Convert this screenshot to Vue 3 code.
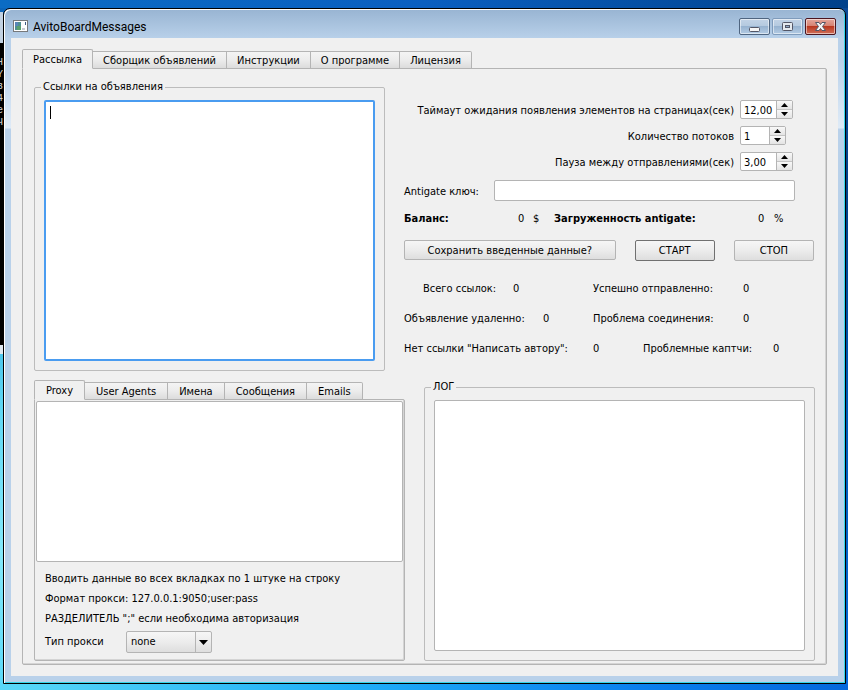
<script setup>
import { ref } from 'vue'

const mainTabs = ['Рассылка', 'Сборщик объявлений', 'Инструкции', 'О программе', 'Лицензия']
const dataTabs = ['Proxy', 'User Agents', 'Имена', 'Сообщения', 'Emails']
const mainTab = ref(0)
const dataTab = ref(0)

const spins = ref([
  { id: 'timeout', label: 'Таймаут ожидания появления элементов на страницах(сек)', value: '12,00', step: 1, digits: 2 },
  { id: 'threads', label: 'Количество потоков', value: '1', step: 1, digits: 0, narrow: true },
  { id: 'pause', label: 'Пауза между отправлениями(сек)', value: '3,00', step: 1, digits: 2 },
])

function change(spin, sign) {
  const next = Math.max(0, parseFloat(spin.value.replace(',', '.')) + sign * spin.step)
  spin.value = next.toFixed(spin.digits).replace('.', ',')
}

const stats = [
  { kind: 'links', a: 'Всего ссылок:', b: 'Успешно отправленно:' },
  { kind: 'removed', a: 'Объявление удаленно:', b: 'Проблема соединения:' },
  { kind: 'captcha', a: 'Нет ссылки "Написать автору":', b: 'Проблемные каптчи:' },
]

const consoleLines = ['Н', 'Y', 'в', '4', 'е', 'Ч']
</script>

<template>
  <div class="desktop">
    <div class="back-window">
      <div class="back-title"></div>
      <div class="console"><span v-for="(c, i) in consoleLines" :key="i">{{ c }}</span></div>
    </div>

    <main class="window">
      <header class="titlebar">
        <svg class="app-icon" viewBox="0 0 15 12" aria-hidden="true">
          <rect x="0.5" y="0.5" width="14" height="11" fill="#fff" stroke="#77797b" />
          <rect x="2" y="2" width="6" height="8" fill="#4f8f92" />
          <rect x="2" y="2" width="3" height="4" fill="#5a86b8" />
          <rect x="4" y="6" width="4" height="4" fill="#5aa06c" />
          <rect x="9" y="8" width="3" height="2" fill="#c9cdd2" />
          <rect x="12" y="2" width="1" height="3" fill="#3f5a86" />
        </svg>
        <h1>AvitoBoardMessages</h1>
        <div class="caption-buttons">
          <button type="button" class="cap" aria-label="Свернуть">
            <svg viewBox="0 0 29 15"><rect x="9.5" y="8.5" width="10" height="4" rx="1" fill="#f5f5f5" stroke="#535666" /></svg>
          </button>
          <button type="button" class="cap dim" aria-label="Развернуть">
            <svg viewBox="0 0 29 15"><rect x="9.5" y="3.5" width="10" height="8" rx="1" fill="#e4e9ee" stroke="#535666" /><rect x="12.5" y="6.5" width="4" height="2" fill="#90aac6" stroke="#535666" /></svg>
          </button>
          <button type="button" class="cap close" aria-label="Закрыть">
            <svg viewBox="0 0 29 15"><path d="M9.500 3.500h3.500l1.500 2 1.500-2h3.500l-3 4 3 4h-3.500l-1.500-2-1.500 2h-3.500l3-4z" fill="#f5f5f5" stroke="#535666" /></svg>
          </button>
        </div>
      </header>

      <div class="client">
        <div class="tabs main-tabs" role="tablist">
          <button v-for="(t, i) in mainTabs" :key="t" type="button" role="tab" class="tab" :class="{ on: i === mainTab }" :aria-selected="i === mainTab" @click="mainTab = i">{{ t }}</button>
        </div>

        <section class="pane main-pane">
          <div class="row top-row">
            <fieldset class="group">
              <legend>Ссылки на объявления</legend>
              <div class="edit focused"><textarea id="links" aria-label="Ссылки на объявления"></textarea><span class="caret"></span></div>
            </fieldset>

            <div class="settings">
              <div class="spin-rows">
                <div v-for="s in spins" :key="s.id" class="spin-row">
                  <label :for="s.id">{{ s.label }}</label>
                  <div class="slot">
                    <div class="spin" :class="{ narrow: s.narrow }">
                      <input :id="s.id" v-model="s.value" type="text" />
                      <div class="steps">
                        <button type="button" aria-label="Больше" @click="change(s, 1)"><svg viewBox="0 0 7 4"><path d="M0 4h7L3.500 0z" /></svg></button>
                        <button type="button" aria-label="Меньше" @click="change(s, -1)"><svg viewBox="0 0 7 4"><path d="M0 0h7L3.500 4z" /></svg></button>
                      </div>
                    </div>
                  </div>
                </div>
              </div>

              <div class="key-row">
                <label for="key">Antigate ключ:</label>
                <input id="key" type="text" />
              </div>

              <div class="balance">
                <b>Баланс:</b><span>0</span><span class="money">$</span>
                <b>Загруженность antigate:</b><span>0</span><span>%</span>
              </div>

              <div class="actions">
                <button type="button" class="push save">Сохранить введенные данные?</button>
                <button type="button" class="push default">СТАРТ</button>
                <button type="button" class="push">СТОП</button>
              </div>

              <div class="stats">
                <div v-for="s in stats" :key="s.kind" class="stat" :class="s.kind">
                  <span>{{ s.a }}</span><span>0</span><span>{{ s.b }}</span><span>0</span>
                </div>
              </div>
            </div>
          </div>

          <div class="row bottom-row">
            <div class="data">
              <div class="tabs data-tabs" role="tablist">
                <button v-for="(t, i) in dataTabs" :key="t" type="button" role="tab" class="tab" :class="{ on: i === dataTab }" :aria-selected="i === dataTab" @click="dataTab = i">{{ t }}</button>
              </div>
              <section class="pane data-pane">
                <div class="edit"><textarea id="proxies" aria-label="Proxy"></textarea></div>
                <div class="notes">
                  <p>Вводить данные во всех вкладках по 1 штуке на строку</p>
                  <p>Формат прокси: 127.0.0.1:9050;user:pass</p>
                  <p>РАЗДЕЛИТЕЛЬ ";" если необходима авторизация</p>
                  <div class="type-row">
                    <label for="ptype">Тип прокси</label>
                    <div class="combo">
                      <select id="ptype"><option>none</option><option>http</option><option>socks5</option></select>
                      <svg viewBox="0 0 9 5" aria-hidden="true"><path d="M0 0h9L4.500 5z" /></svg>
                    </div>
                  </div>
                </div>
              </section>
            </div>

            <fieldset class="group">
              <legend>ЛОГ</legend>
              <div class="edit"><textarea id="log" aria-label="ЛОГ" readonly></textarea></div>
            </fieldset>
          </div>
        </section>
      </div>
    </main>
  </div>
</template>

<style>
body {
  margin: 0;
}
</style>

<style scoped>
* {
  box-sizing: border-box;
}

.desktop {
  position: relative;
  display: flex;
  min-height: 100vh;
  padding: 8px 2px 6px 3px;
  background:
    linear-gradient(90deg, #0b6cc4, #0a5fc0 50%, #00418a) top / 100% 8px no-repeat,
    linear-gradient(90deg, #5ad8f8, #20b0f8 40%, #0a80ee 75%, #0468dc) bottom / 100% 6px no-repeat,
    linear-gradient(#0a4a98, #003f8c 30%, #0058b8 60%, #0468dc) right / 50% 100% no-repeat,
    linear-gradient(#0a62b8, #30b0e0 40%, #62d8f4 60%, #84e8fa 80%, #5ad8f8);
  font: 11px/16px "DejaVu Sans Condensed", "Noto Sans", sans-serif;
  color: #000;
}

button,
input,
select,
textarea {
  margin: 0;
  font: inherit;
  color: inherit;
  outline: 0;
}

.back-window {
  position: absolute;
  top: 12px;
  left: 0;
  width: 3px;
  height: 342px;
  overflow: hidden;
  border-bottom: 9px solid #dfe8f0;
  background: #000;
}

.back-title {
  height: 31px;
  background: #c3d2e2;
}

.console {
  display: flex;
  flex-direction: column;
  padding-top: 14px;
  font: 10px/12px "Liberation Mono", monospace;
  color: #d0d0d0;
  text-indent: -3px;
}

.window {
  position: relative;
  flex: 1;
  display: flex;
  flex-direction: column;
  padding: 0 7px 7px;
  border: 1px solid #000;
  border-radius: 7px 7px 0 0;
  background: linear-gradient(#98b4d2, #b9d1ea 30px, #b9d1ea 50px, #dfebf7 119px, #b9d1ea 120px);
  box-shadow: inset 1px 1px #fff, inset -1px -1px #35d5e8;
}

.titlebar {
  display: flex;
  align-items: center;
  height: 29px;
  padding-left: 2px;
}

.app-icon {
  width: 15px;
  height: 12px;
  margin-top: 5px;
}

h1 {
  flex: 1;
  margin: 6px 0 0 5px;
  font: 12px/16px Roboto, "Noto Sans", sans-serif;
}

.caption-buttons {
  display: flex;
  gap: 2px;
  padding: 6px 2px 0 0;
}

.cap {
  width: 31px;
  height: 17px;
  padding: 0;
  border: 1px solid #4f6580;
  border-radius: 2px;
  background: linear-gradient(#c2d3e6, #b4c9df 48%, #97b3d0 50%, #b3cbe4);
  box-shadow: inset 0 0 0 1px #ffffff88;
}

.cap svg {
  display: block;
  width: 29px;
  height: 15px;
}

.dim {
  border-color: #7f9bbb;
}

.close {
  border-color: #4c1620;
  background: linear-gradient(#e5a79c, #d58070 48%, #b9371f 50%, #d0705a);
}

.client {
  flex: 1;
  display: flex;
  flex-direction: column;
  padding: 11px 11px;
  background: #f0f0f0;
}

.tabs {
  position: relative;
  z-index: 1;
  display: flex;
  align-items: flex-end;
  height: 20px;
  margin-bottom: -1px;
}

.tab {
  height: 18px;
  padding: 2px 10px 0;
  border: 1px solid #b4b4b4;
  border-left-width: 0;
  background: linear-gradient(#f4f4f4, #ececec 50%, #dcdcdc);
  line-height: 14px;
  white-space: nowrap;
}

.data-tabs .tab {
  padding: 2px 11px 0;
}

.tab:last-child {
  border-radius: 0 2px 0 0;
}

.tab.on {
  height: 20px;
  border-left-width: 1px;
  border-bottom-color: #f0f0f0;
  border-radius: 2px 2px 0 0;
  background: #f0f0f0;
}

.pane {
  flex: 1;
  border: 1px solid #b4b4b4;
  border-radius: 0 2px 2px 2px;
  box-shadow: inset -1px -1px #d4d4d4;
}

.main-pane {
  display: flex;
  flex-direction: column;
  gap: 9px;
  padding: 11px 11px 3px;
}

.row {
  display: grid;
  column-gap: 19px;
}

.top-row {
  grid-template-columns: 351fr 411fr;
  height: 291px;
}

.bottom-row {
  flex: 1;
  grid-template-columns: 371fr 391fr;
}

.group {
  display: flex;
  min-width: 0;
  margin: 0;
  padding: 6px 9px 9px;
  border: 1px solid #bcbcbc;
  border-radius: 2px;
}

.group legend {
  padding: 0 2px;
  margin-left: -3px;
  line-height: 14px;
}

.edit {
  position: relative;
  flex: 1;
  display: flex;
  border: 1px solid #b4b4b4;
  border-radius: 2px;
  background: #fff;
}

.edit textarea {
  flex: 1;
  width: 100%;
  padding: 4px;
  border: 0;
  background: transparent;
  resize: none;
}

.focused {
  border: 2px solid #4a9cf0;
}

.caret {
  position: absolute;
  top: 4px;
  left: 4px;
  width: 1px;
  height: 13px;
  background: #000;
}

.settings {
  padding-top: 20px;
  white-space: nowrap;
}

.spin-rows {
  display: grid;
  gap: 7px;
}

.spin-row {
  display: grid;
  grid-template-columns: 1fr 75px;
  align-items: center;
  column-gap: 6px;
  height: 19px;
  text-align: right;
}

.spin-row label,
.key-row label {
  padding-top: 2px;
}

.spin {
  display: flex;
  width: 53px;
  height: 19px;
  border: 1px solid #b4b4b4;
  border-radius: 2px;
  background: #fff;
}

.spin.narrow {
  width: 46px;
}

.spin input {
  flex: 1;
  min-width: 0;
  padding: 2px 0 0 3px;
  border: 0;
  background: transparent;
}

.steps {
  display: grid;
  width: 16px;
  border-left: 1px solid #b4b4b4;
}

.steps button {
  display: flex;
  align-items: center;
  justify-content: center;
  padding: 0;
  border: 0;
  background: linear-gradient(#f8f8f8, #e4e4e4);
}

.steps button + button {
  border-top: 1px solid #c4c4c4;
}

.steps svg {
  width: 7px;
  height: 4px;
}

.key-row {
  display: grid;
  grid-template-columns: 90px 1fr;
  align-items: center;
  margin-top: 9px;
  padding-right: 20px;
}

.key-row input {
  width: 100%;
  height: 21px;
  padding: 0 4px;
  border: 1px solid #b4b4b4;
  border-radius: 2px;
  background: #fff;
}

.balance {
  display: grid;
  grid-template-columns: 114px 15px 21px 204px 16px 1fr;
  margin-top: 10px;
}

.actions {
  display: grid;
  grid-template-columns: 211fr 80fr 80fr;
  gap: 19px;
  margin-top: 13px;
  padding-right: 1px;
}

.push {
  height: 21px;
  padding: 1px 0 0;
  border: 1px solid #b4b4b4;
  border-radius: 2px;
  background: linear-gradient(#f6f6f6, #ececec 50%, #dedede);
}

.save {
  height: 20px;
}

.default {
  border-color: #707070;
}

.stats {
  display: grid;
  row-gap: 14px;
  margin-top: 20px;
}

.stat {
  display: grid;
}

.links {
  grid-template-columns: 90px 80px 150px 1fr;
  padding-left: 19px;
}

.removed {
  grid-template-columns: 139px 50px 150px 1fr;
}

.captcha {
  grid-template-columns: 189px 50px 130px 1fr;
}

.data {
  display: flex;
  flex-direction: column;
}

.data-pane {
  display: flex;
  flex-direction: column;
  padding: 1px;
}

.notes {
  padding: 9px 9px 6px;
}

.notes p {
  margin: 0 0 4px;
}

.type-row {
  display: grid;
  grid-template-columns: 81px 86px;
  align-items: center;
}

.combo {
  position: relative;
}

.combo select {
  appearance: none;
  display: block;
  width: 100%;
  height: 22px;
  padding: 0 20px 0 4px;
  border: 1px solid #b4b4b4;
  border-radius: 2px;
  background: linear-gradient(90deg, transparent 68px, #b4b4b4 68px, #b4b4b4 69px, transparent 69px), linear-gradient(#f6f6f6, #ececec 50%, #dedede);
}

.combo svg {
  position: absolute;
  top: 9px;
  right: 4px;
  width: 9px;
  height: 5px;
  pointer-events: none;
}
</style>
